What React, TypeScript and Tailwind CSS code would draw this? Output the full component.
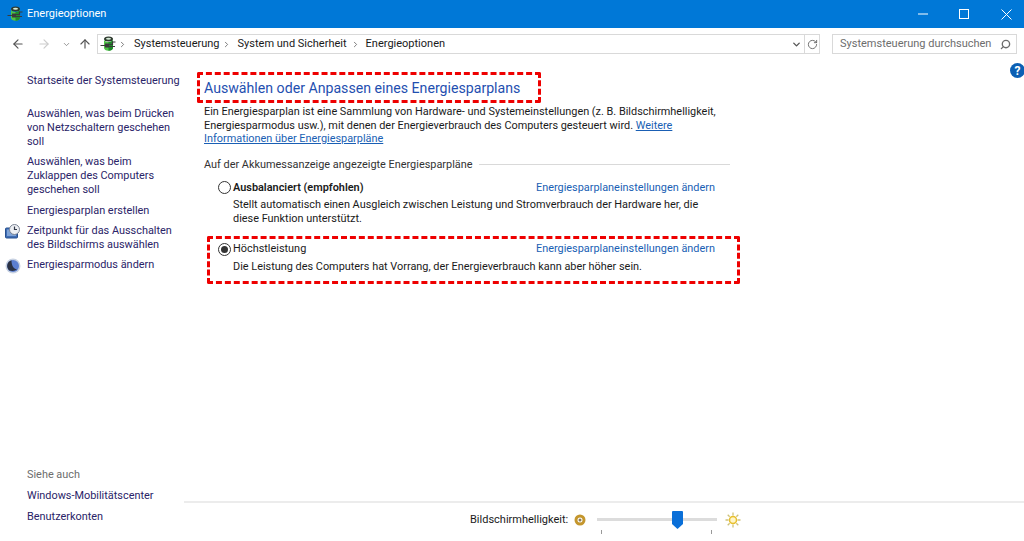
import { ArrowLeft, ArrowRight, ArrowUp, ChevronDown, ChevronRight, RotateCw, Search } from "lucide-react";

const PowerIcon = ({ size = 16 }: { size?: number }) => (
  <svg width={size} height={size} viewBox="0 0 16 16">
    <ellipse cx="8.500" cy="3" rx="4.500" ry="2.500" fill="#2f3a30" />
    <path d="M4 3.500v8.500c0 1.500 2 2.800 4.500 2.800S13 13.500 13 12V3.500c0 1.500-2 2.500-4.500 2.500S4 5 4 3.500z" fill="#4fc247" />
    <path d="M8.500 6c2.500 0 4.500-1 4.500-2.500V12c0 1.500-2 2.800-4.500 2.800z" fill="#1f8a2a" />
    <ellipse cx="8.500" cy="2.800" rx="2.500" ry="1" fill="#d5ead5" />
    <rect x="5" y="7.500" width="4" height="4" fill="#3a3a3a" />
    <path d="M0.500 9.500h5M9 8.500h3.500V6h3M9 10.500h6" stroke="#3a3a3a" strokeWidth="1.200" fill="none" />
  </svg>
);

const ClockIcon = () => (
  <svg width="16" height="16" viewBox="0 0 16 16">
    <rect x="0.500" y="4" width="12" height="10" rx="1" fill="#3f6db5" stroke="#27508f" />
    <rect x="2" y="5.500" width="9" height="6.500" fill="#7fa3d6" />
    <circle cx="9.500" cy="5.500" r="5" fill="#eef0f4" stroke="#7b8494" />
    <path d="M9.500 2.500v3h2.500" stroke="#333a48" strokeWidth="1.200" fill="none" />
  </svg>
);

const MoonIcon = () => (
  <svg width="16" height="16" viewBox="0 0 16 16">
    <circle cx="8" cy="8" r="7.500" fill="#c8d2e2" />
    <circle cx="8" cy="8" r="6" fill="#5c7fd0" />
    <path d="M6.500 2.200a6 6 0 0 0-2.500 10c3 1.500 6.500.8 8-1.200c-3 .3-5.500-3-5.500-8.800z" fill="#2b3243" />
  </svg>
);

const HelpIcon = () => (
  <div className="flex h-[15px] w-[15px] items-center justify-center rounded-full bg-[#0b5fb4] text-[12px] font-bold leading-none text-white">?</div>
);

const SunIcon = () => (
  <svg width="16" height="16" viewBox="0 0 16 16">
    <path d="M8 0.500v3M8 12.500v3M0.500 8h3M12.500 8h3M2.700 2.700l2 2M11.300 11.300l2 2M13.300 2.700l-2 2M4.700 11.300l-2 2" stroke="#cfc27a" strokeWidth="1.300" />
    <circle cx="8" cy="8" r="3.500" fill="#fff6c8" stroke="#e8bf2c" strokeWidth="1.500" />
  </svg>
);

const DimIcon = () => (
  <svg width="12" height="12" viewBox="0 0 12 12">
    <circle cx="6" cy="6" r="4" fill="none" stroke="#c4962d" strokeWidth="3" />
    <circle cx="6" cy="6" r="1.500" fill="#8a7a55" />
  </svg>
);

const SideLink = ({ children, icon }: { children: React.ReactNode; icon?: React.ReactNode }) => (
  <a className="relative block leading-[14px] text-[#2a2468]">
    {icon && <span className="absolute -left-[22px] top-0">{icon}</span>}
    {children}
  </a>
);

const Sidebar = () => (
  <aside className="flex w-[184px] shrink-0 flex-col pb-[17px] pl-[27px] pr-[6px] pt-[14px] text-[10.900px]">
    <a className="whitespace-nowrap leading-[14px] text-[#2a2468]">Startseite der Systemsteuerung</a>
    <div className="mt-[19px] flex flex-col gap-[6.300px]">
      <SideLink>Auswählen, was beim Drücken von Netzschaltern geschehen soll</SideLink>
      <SideLink>Auswählen, was beim Zuklappen des Computers geschehen soll</SideLink>
      <SideLink>Energiesparplan erstellen</SideLink>
      <SideLink icon={<ClockIcon />}>Zeitpunkt für das Ausschalten des Bildschirms auswählen</SideLink>
      <SideLink icon={<MoonIcon />}>Energiesparmodus ändern</SideLink>
    </div>
    <div className="mt-auto flex flex-col gap-[7px]">
      <span className="leading-[14px] text-[#6d6d6d]">Siehe auch</span>
      <SideLink>Windows-Mobilitätscenter</SideLink>
      <SideLink>Benutzerkonten</SideLink>
    </div>
  </aside>
);

const Radio = ({ checked }: { checked?: boolean }) => (
  <span className="flex h-[13px] w-[13px] shrink-0 items-center justify-center rounded-full border border-[#333] bg-white">
    {checked && <span className="h-[7px] w-[7px] rounded-full bg-[#333]" />}
  </span>
);

const PlanLink = () => <a className="text-[#1a5fb4]">Energiesparplaneinstellungen ändern</a>;

const Main = () => (
  <main className="flex min-w-0 flex-1 flex-col">
    <div className="relative flex-1 pl-[13px] pt-[12px] text-[10.900px] text-[#1a1a1a]">
      <div className="absolute -right-[1px] top-[3px]"><HelpIcon /></div>
      <h1 className="w-[344px] rounded-[2px] border-[3px] border-dashed border-[#ee0000] pl-[4px] pt-[1px] text-[14.150px] leading-[24px] text-[#1f4fb0]">
        Auswählen oder Anpassen eines Energiesparplans
      </h1>
      <div className="ml-[7px] w-[526px]">
        <p className="mt-[2px] leading-[13.500px]">
          Ein Energiesparplan ist eine Sammlung von Hardware- und Systemeinstellungen (z. B. Bildschirmhelligkeit, Energiesparmodus usw.), mit denen der Energieverbrauch des Computers gesteuert wird.{" "}
          <a className="text-[#1a5fb4] underline">Weitere Informationen über Energiesparpläne</a>
        </p>
        <div className="mt-[12px] flex items-center gap-[6px]">
          <span className="leading-[14px] text-[#333]">Auf der Akkumessanzeige angezeigte Energiesparpläne</span>
          <span className="h-px flex-1 bg-[#d9d9d9]" />
        </div>
        <div className="ml-[14px] mt-[8px] flex items-center justify-between pr-[15px]">
          <div className="flex items-center gap-[2px]">
            <Radio />
            <b className="font-semibold">Ausbalanciert (empfohlen)</b>
          </div>
          <PlanLink />
        </div>
        <p className="ml-[29px] mt-[2px] pr-[20px] leading-[14px]">
          Stellt automatisch einen Ausgleich zwischen Leistung und Stromverbrauch der Hardware her, die diese Funktion unterstützt.
        </p>
      </div>
      <div className="ml-[10px] mt-[10px] w-[533px] rounded-[2px] border-[3px] border-dashed border-[#ee0000] pb-[7px] pl-[8px] pr-[22px] pt-[2px]">
        <div className="flex items-center justify-between">
          <div className="flex items-center gap-[2px]">
            <Radio checked />
            <span>Höchstleistung</span>
          </div>
          <PlanLink />
        </div>
        <p className="ml-[15px] mt-[3px] leading-[14px]">Die Leistung des Computers hat Vorrang, der Energieverbrauch kann aber höher sein.</p>
      </div>
    </div>
    <footer className="flex h-[40px] items-start border-t-2 border-[#ececec] pl-[286px] pt-[9px] text-[11px] text-[#1a1a1a]">
      <span className="w-[98px] whitespace-nowrap leading-[16px]">Bildschirmhelligkeit:</span>
      <span className="ml-[6px] mt-[2px]"><DimIcon /></span>
      <div className="relative ml-[11px] mt-[6px] h-[3px] w-[120px] bg-[#dcdcdc]">
        <svg className="absolute left-[75px] -top-[7px]" width="11" height="18" viewBox="0 0 11 18">
          <path d="M0 1q0-1 1-1h9q1 0 1 1v12l-5.500 5L0 13z" fill="#0a6fd8" />
        </svg>
        <span className="absolute left-[4px] top-[12px] h-[4px] w-px bg-[#999]" />
        <span className="absolute right-[5px] top-[12px] h-[4px] w-px bg-[#999]" />
      </div>
      <span className="ml-[8px]"><SunIcon /></span>
    </footer>
  </main>
);

export default function App() {
  return (
    <div className="flex h-[541px] w-[1024px] flex-col overflow-hidden bg-white" style={{ fontFamily: 'Roboto, "Noto Sans", sans-serif' }}>
      <header className="flex h-[28px] shrink-0 items-center bg-[#0078d7] pl-[7px] text-[11px] text-white">
        <PowerIcon />
        <span className="ml-[4px] mt-[1px]">Energieoptionen</span>
        <div className="ml-auto flex items-center">
          <svg className="mr-[31px]" width="10" height="10" viewBox="0 0 10 10"><path d="M0 5h10" stroke="#fff" /></svg>
          <svg className="mr-[32px]" width="10" height="10" viewBox="0 0 10 10"><rect x="0.500" y="0.500" width="9" height="9" fill="none" stroke="#fff" /></svg>
          <svg className="mr-[12px]" width="11" height="11" viewBox="0 0 11 11"><path d="M0.500 0.500l10 10M10.500 0.500l-10 10" stroke="#fff" /></svg>
        </div>
      </header>
      <nav className="flex h-[32px] shrink-0 items-center text-[11px]">
        <div className="flex w-[97px] shrink-0 items-center pl-[11px]">
          <ArrowLeft size={14} className="text-[#555]" />
          <ArrowRight size={14} className="ml-[12px] text-[#ccc]" />
          <ChevronDown size={9} className="ml-[11px] text-[#777]" />
          <ArrowUp size={14} className="ml-[7px] text-[#555]" />
        </div>
        <div className="flex h-[20px] w-[723px] items-center border border-[#d9d9d9] pl-[2px] text-[#1a1a1a]">
          <PowerIcon />
          <ChevronRight size={9} className="ml-[2px] text-[#555]" />
          <span className="ml-[7px] mt-[1px]">Systemsteuerung</span>
          <ChevronRight size={9} className="ml-[2px] text-[#555]" />
          <span className="ml-[7px] mt-[1px]">System und Sicherheit</span>
          <ChevronRight size={9} className="ml-[4px] text-[#555]" />
          <span className="ml-[6px] mt-[1px]">Energieoptionen</span>
          <ChevronDown size={11} strokeWidth={3} className="ml-auto mr-[2px] text-[#555]" />
          <span className="flex h-full w-[15px] items-center justify-center border-l border-[#d9d9d9]">
            <RotateCw size={11} className="text-[#666]" />
          </span>
        </div>
        <div className="ml-[12px] flex h-[20px] w-[185px] items-center justify-between border border-[#d9d9d9] pl-[7px] pr-[5px] text-[#6d6d6d]">
          <span className="mt-[1px] whitespace-nowrap">Systemsteuerung durchsuchen</span>
          <Search size={11} strokeWidth={3} className="-scale-x-100" />
        </div>
      </nav>
      <div className="flex min-h-0 flex-1">
        <Sidebar />
        <Main />
      </div>
    </div>
  );
}
